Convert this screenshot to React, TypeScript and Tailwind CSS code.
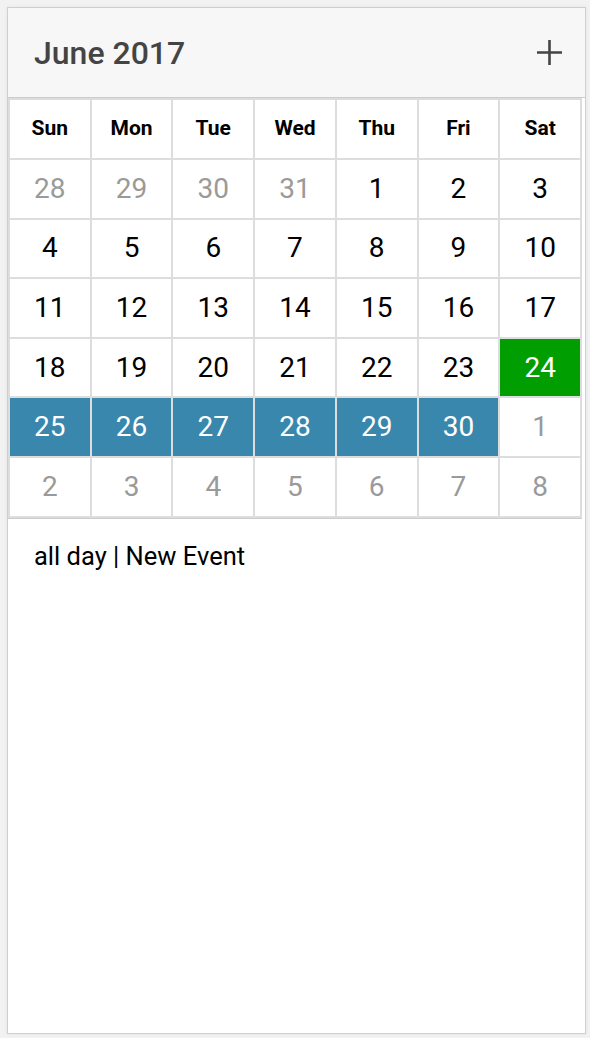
const weekdays = ["Sun", "Mon", "Tue", "Wed", "Thu", "Fri", "Sat"];

type Day = { n: number; muted?: boolean; kind?: "today" | "range" };

const days: Day[] = [
  { n: 28, muted: true }, { n: 29, muted: true }, { n: 30, muted: true }, { n: 31, muted: true },
  { n: 1 }, { n: 2 }, { n: 3 },
  { n: 4 }, { n: 5 }, { n: 6 }, { n: 7 }, { n: 8 }, { n: 9 }, { n: 10 },
  { n: 11 }, { n: 12 }, { n: 13 }, { n: 14 }, { n: 15 }, { n: 16 }, { n: 17 },
  { n: 18 }, { n: 19 }, { n: 20 }, { n: 21 }, { n: 22 }, { n: 23 }, { n: 24, kind: "today" },
  { n: 25, kind: "range" }, { n: 26, kind: "range" }, { n: 27, kind: "range" }, { n: 28, kind: "range" },
  { n: 29, kind: "range" }, { n: 30, kind: "range" }, { n: 1, muted: true },
  { n: 2, muted: true }, { n: 3, muted: true }, { n: 4, muted: true }, { n: 5, muted: true },
  { n: 6, muted: true }, { n: 7, muted: true }, { n: 8, muted: true },
];

function cellClass(d: Day) {
  if (d.kind === "today") return "bg-[#009e00] text-white";
  if (d.kind === "range") return "bg-[#3a87ad] text-white";
  if (d.muted) return "bg-white text-[#9a9a9a]";
  return "bg-white text-black";
}

export default function App() {
  return (
    <div className="min-h-[1038px] w-[590px] bg-[#f2f2f2] pl-[7px] pt-[7px] font-['Roboto',sans-serif]">
      <div className="flex h-[1027px] w-[579px] flex-col border border-[#cfcfcf] bg-white shadow-[0_0_4px_rgba(0,0,0,0.06)]">
        <header className="flex h-[90px] shrink-0 items-center justify-between border-b border-[#cccccc] bg-[#f7f7f7] pl-[26px] pr-[22px]">
          <h1 className="text-[32px] font-medium leading-none text-[#444]">June 2017</h1>
          <svg width="27" height="27" viewBox="0 0 27 27" aria-hidden="true">
            <path d="M13.5 1v25M1 13.5h25" stroke="#444" strokeWidth="2.6" fill="none" />
          </svg>
        </header>

        <div className="grid w-[574px] grid-cols-7 gap-[2px] border-b border-[#cccccc] bg-[#dddddd] p-[2px]">
          {weekdays.map((w) => (
            <div key={w} className="flex h-[58px] items-center justify-center bg-white text-[21px] font-bold text-black">
              {w}
            </div>
          ))}
          {days.map((d, i) => (
            <div
              key={i}
              className={`flex h-[57.6px] items-center justify-center text-[28px] ${cellClass(d)}`}
            >
              {d.n}
            </div>
          ))}
        </div>

        <div className="flex-1 px-[26px] pt-[22px]">
          <p className="text-[25.5px] leading-[30px] text-black">all day | New Event</p>
        </div>
      </div>
    </div>
  );
}
